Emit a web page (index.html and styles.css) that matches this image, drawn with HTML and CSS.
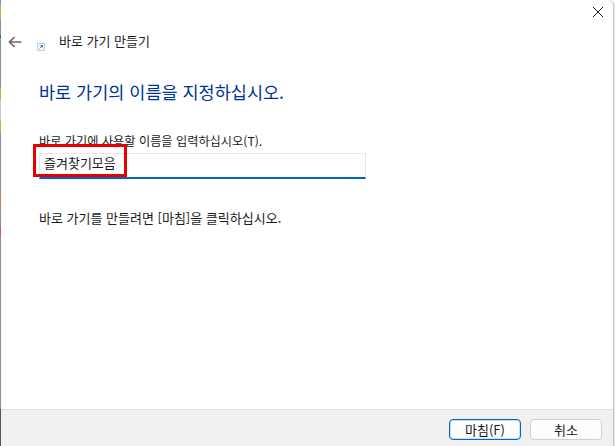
FILE: index.html
```html
<!DOCTYPE html>
<html lang="ko">
<head>
    <meta charset="UTF-8">
    <meta name="viewport" content="width=device-width, initial-scale=1.0">
    <title>바로 가기 만들기</title>
    <link rel="stylesheet" href="styles.css">
</head>
<body>
    <div class="window">
        <div class="titlebar">
            <svg class="close-icon" width="10" height="10" viewBox="0 0 10 10">
                <path d="M0 0L10 10M10 0L0 10" stroke="#1a1a1a" stroke-width="1" fill="none"/>
            </svg>
        </div>
        <div class="header">
            <svg class="back-icon" width="14" height="12" viewBox="0 0 14 12">
                <path d="M13.5 6H1.5M6.5 1L1.5 6L6.5 11" stroke="#6a6a6a" stroke-width="1.7" fill="none"/>
            </svg>
            <svg class="shortcut-icon" width="8" height="8" viewBox="0 0 8 8">
                <rect x="0.5" y="0.5" width="7" height="7" fill="#f4f6f8" stroke="#c8ccd2"/>
                <path d="M2.5 5.5L5.5 2.5M3.5 2.5H5.5V4.5" stroke="#2f7fd0" stroke-width="1" fill="none"/>
            </svg>
            <span class="header-title">바로 가기 만들기</span>
        </div>
        <div class="content">
            <h1 class="heading">바로 가기의 이름을 지정하십시오.</h1>
            <label class="field-label">바로 가기에 사용할 이름을 입력하십시오(T).</label>
            <div class="name-field">
                <span class="name-value">즐겨찾기모음</span>
                <div class="highlight"></div>
            </div>
            <p class="hint">바로 가기를 만들려면 [마침]을 클릭하십시오.</p>
        </div>
        <div class="footer">
            <button class="btn btn-primary">마침(F)</button>
            <button class="btn">취소</button>
        </div>
    </div>
</body>
</html>
```

FILE: styles.css
```css
html, body {
    margin: 0;
    height: 100%;
}
/* desktop wallpaper peeking out along the left edge of the dialog */
body {
    width: 615px;
    height: 446px;
    overflow: hidden;
    background-color: #fff;
    background-image: linear-gradient(#6f93d8 0 5px, #c9ae3c 5px 19px, #7f95a5 19px 35px, #5c5a58 35px 38px, #5fa5a8 38px 42px, #7f95a5 42px 88px, #c9ae3c 88px 100px, #c9c9c9 100px 121px, #c9ae3c 121px 133px, #7f95a5 133px 194px, #bf8658 194px 212px, #7f95a5 212px 226px, #b5695a 226px 236px, #7f95a5 236px 409px, #555 409px 446px);
    background-size: 1px 100%;
    background-repeat: no-repeat;
    font-family: "Noto Sans CJK KR", "Liberation Sans", sans-serif;
    color: #1a1a1a;
}
.window {
    margin-left: 1px;
    width: 612px;
    height: 446px;
    background: #fff;
    display: flex;
    flex-direction: column;
    border-right: 1px solid #c4c4c4;
    border-radius: 6px 6px 0 0;
    box-shadow: 1px 0 0 #e6e6e6;
}
.titlebar {
    height: 30px;
    display: flex;
    justify-content: flex-end;
    align-items: flex-start;
}
.close-icon {
    margin: 7px 10px 0 0;
}
.header {
    height: 24px;
    display: flex;
    align-items: center;
}
.back-icon {
    margin-left: 7px;
}
.shortcut-icon {
    margin: 10px 0 0 15px;
}
.header-title {
    margin-left: 14px;
    padding-bottom: 4px;
    font-size: 13px;
}
.content {
    flex: 1;
    padding: 0 0 0 38px;
}
.heading {
    margin: 0;
    padding-top: 28px;
    font-size: 17.5px;
    font-weight: 400;
    line-height: 20px;
    color: #003399;
}
.field-label {
    display: block;
    margin-top: 31px;
    font-size: 12.2px;
    line-height: 16px;
}
.name-field {
    position: relative;
    box-sizing: border-box;
    width: 327px;
    height: 26px;
    margin-top: 4px;
    border: 1px solid #e6e6e6;
    border-bottom: 2px solid #0067c0;
    font-size: 13px;
    line-height: 18px;
}
.name-value {
    margin-left: 4px;
}
.highlight {
    position: absolute;
    left: -7px;
    top: -10px;
    width: 94px;
    height: 33px;
    box-sizing: border-box;
    border: 3px solid #e60000;
}
.hint {
    margin: 31px 0 0;
    font-size: 13px;
    line-height: 16px;
}
.footer {
    height: 37px;
    box-sizing: border-box;
    background: #f0f0f0;
    border-top: 1px solid #dfdfdf;
    display: flex;
    justify-content: flex-end;
    gap: 9px;
    padding: 9px 11px 0 0;
}
.btn {
    width: 72px;
    height: 21px;
    padding: 0 0 2px;
    background: #fdfdfd;
    border: 1px solid #d0d0d0;
    border-radius: 4px;
    font-family: inherit;
    font-size: 13px;
    color: #1a1a1a;
}
.btn-primary {
    border: 1px solid #0067c0;
    box-shadow: inset 0 0 0 1px rgba(0, 103, 192, 0.2);
}
```
